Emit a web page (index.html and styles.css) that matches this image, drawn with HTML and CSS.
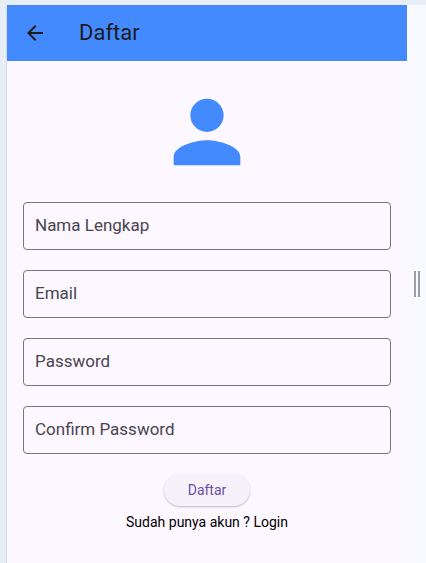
FILE: index.html
```html
<!DOCTYPE html>
<html lang="id">
<head>
<meta charset="utf-8">
<meta name="viewport" content="width=device-width, initial-scale=1">
<title>Daftar</title>
<link rel="stylesheet" href="styles.css">
</head>
<body>
<div class="workspace">
  <main class="screen">
    <header class="app-bar">
      <button class="back" type="button" aria-label="Kembali">
        <svg viewBox="0 0 24 24" aria-hidden="true"><path d="M20 11H7.83l5.59-5.59L12 4l-8 8 8 8 1.41-1.41L7.83 13H20v-2z"/></svg>
      </button>
      <h1 class="title">Daftar</h1>
    </header>
    <form class="form">
      <svg class="avatar" viewBox="0 0 24 24" aria-hidden="true"><path d="M12 12c2.21 0 4-1.79 4-4s-1.79-4-4-4-4 1.79-4 4 1.79 4 4 4zm0 2c-2.67 0-8 1.34-8 4v2h16v-2c0-2.66-5.33-4-8-4z"/></svg>
      <input class="field" type="text" placeholder="Nama Lengkap" aria-label="Nama Lengkap">
      <input class="field" type="email" placeholder="Email" aria-label="Email">
      <input class="field" type="password" placeholder="Password" aria-label="Password">
      <input class="field" type="password" placeholder="Confirm Password" aria-label="Confirm Password">
      <div class="actions">
        <button class="submit" type="button">Daftar</button>
        <a class="login" href="#login">Sudah punya akun ? Login</a>
      </div>
    </form>
  </main>
  <div class="splitter"><span class="grip"></span></div>
</div>
</body>
</html>
```
FILE: styles.css
```css
* {
  box-sizing: border-box;
}

body {
  margin: 0;
  background: #e8eef6;
  font-family: Roboto, "Liberation Sans", sans-serif;
}

.workspace {
  display: flex;
  min-height: 100vh;
  padding: 5px 0 0 7px;
}

.screen {
  flex: 1;
  min-width: 0;
  background: #fdf7ff;
  box-shadow: -1px 0 1px #d9dbe4;
}

.app-bar {
  display: flex;
  align-items: center;
  gap: 20px;
  height: 56px;
  padding: 0 4px;
  background: #448aff;
  color: #1d1b20;
}

.back {
  display: flex;
  align-items: center;
  justify-content: center;
  width: 48px;
  height: 48px;
  padding: 0;
  border: 0;
  background: none;
  color: inherit;
}

.back svg {
  width: 24px;
  height: 24px;
  fill: currentColor;
}

.title {
  margin: 0;
  font-size: 22px;
  line-height: 28px;
  font-weight: 400;
}

.form {
  display: flex;
  flex-direction: column;
  gap: 20px;
  padding: 21px 16px;
}

.avatar {
  align-self: center;
  width: 100px;
  height: 100px;
  fill: #448aff;
}

.field {
  width: 100%;
  height: 48px;
  padding: 0 11px 2px;
  border: 1px solid #79747e;
  border-radius: 4px;
  background: transparent;
  color: #1d1b20;
  font-family: inherit;
  font-size: 17px;
}

.field::placeholder {
  color: #49454f;
  opacity: 1;
}

.actions {
  display: flex;
  flex-direction: column;
  align-items: center;
  gap: 6px;
}

.submit {
  height: 32px;
  padding: 0 24px;
  border: 0;
  border-radius: 16px;
  background: #f7f2fa;
  box-shadow: 0 1px 2px rgba(0, 0, 0, 0.25);
  color: #6750a4;
  font-family: inherit;
  font-size: 14px;
  font-weight: 400;
}

.login {
  color: #000;
  font-size: 14px;
  line-height: 20px;
  text-decoration: none;
}

.splitter {
  display: flex;
  align-items: center;
  justify-content: center;
  width: 19px;
  background: #f8faff;
}

.grip {
  width: 6px;
  height: 26px;
  border: solid #9e9e9e;
  border-width: 0 2px;
}
```
